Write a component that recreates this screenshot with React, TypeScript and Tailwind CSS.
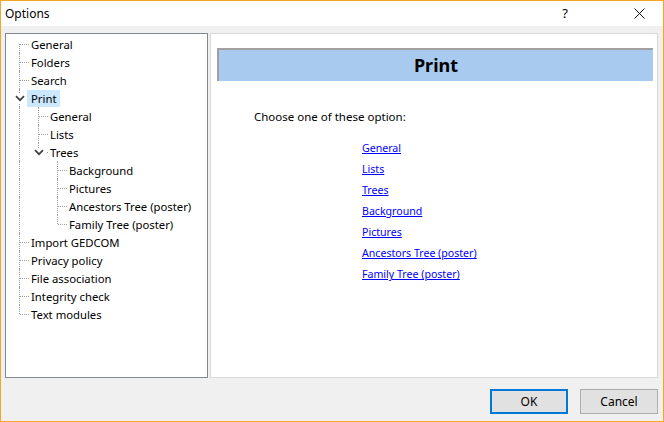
import type { ReactNode } from 'react'

type Node = { label: string; children?: Node[]; selected?: boolean }

const tree: Node[] = [
  { label: 'General' },
  { label: 'Folders' },
  { label: 'Search' },
  {
    label: 'Print',
    selected: true,
    children: [
      { label: 'General' },
      { label: 'Lists' },
      {
        label: 'Trees',
        children: [
          { label: 'Background' },
          { label: 'Pictures' },
          { label: 'Ancestors Tree (poster)' },
          { label: 'Family Tree (poster)' },
        ],
      },
    ],
  },
  { label: 'Import GEDCOM' },
  { label: 'Privacy policy' },
  { label: 'File association' },
  { label: 'Integrity check' },
  { label: 'Text modules' },
]

const links = ['General', 'Lists', 'Trees', 'Background', 'Pictures', 'Ancestors Tree (poster)', 'Family Tree (poster)']

function Chevron() {
  return (
    <svg width="10" height="7" viewBox="0 0 10 7">
      <path d="M1 1.2 L5 5.2 L9 1.2" fill="none" stroke="#404040" strokeWidth="1.7" />
    </svg>
  )
}

// one row of the tree; guides = whether each ancestor level still has siblings below
function Row({ node, guides, first, last }: { node: Node; guides: boolean[]; first: boolean; last: boolean }) {
  const open = !!node.children
  const cells: ReactNode[] = guides.map((g, i) => (
    <div key={i} className="relative w-[19px] h-full shrink-0">
      {g && <div className="absolute left-[9px] top-0 bottom-0 border-l border-dotted border-[#a0a0a0]" />}
    </div>
  ))
  return (
    <div className="flex items-center h-[18px]">
      {cells}
      <div className="relative w-[19px] h-full shrink-0 flex items-center">
        <div
          className={`absolute left-[9px] border-l border-dotted border-[#a0a0a0] ${first ? 'top-[9px]' : 'top-0'} ${last ? 'h-[9px]' : 'bottom-0'}`}
        />
        {open ? (
          <>
            <div className="absolute left-[4px] top-[5px] w-[11px] h-[9px] bg-white flex items-center justify-center">
              <Chevron />
            </div>
            {!node.selected && <div className="absolute left-[18px] top-[9px] w-px h-px bg-[#a0a0a0]" />}
          </>
        ) : (
          <div className="absolute left-[10px] right-0 top-[9px] border-t border-dotted border-[#a0a0a0]" />
        )}
      </div>
      <span
        className={`leading-[17px] h-[17px] px-[2px] whitespace-nowrap ${node.selected ? 'bg-[#cce8ff] -ml-[2px] px-[4px]' : ''}`}
      >
        {node.label}
      </span>
    </div>
  )
}

function renderTree(nodes: Node[], guides: boolean[], root: boolean): ReactNode[] {
  const out: ReactNode[] = []
  nodes.forEach((n, i) => {
    const last = i === nodes.length - 1
    out.push(<Row key={guides.length + n.label + i} node={n} guides={guides} first={root && i === 0} last={last} />)
    if (n.children) out.push(...renderTree(n.children, [...guides, !last], false))
  })
  return out
}

export default function App() {
  return (
    <div
      className="w-[664px] h-[422px] border border-[#f5a623] flex flex-col bg-[#f0f0f0] text-[11.3px] text-black overflow-hidden"
      style={{ fontFamily: '"Noto Sans", "Open Sans", sans-serif' }}
    >
      <div className="h-[25px] bg-white flex items-center shrink-0 text-[12px]">
        <span className="pl-[4px]">Options</span>
        <span className="ml-auto mr-[66px] text-[13px]">?</span>
        <svg width="11" height="11" viewBox="0 0 11 11" className="mr-[18px]">
          <path d="M0.5 0.5 L10.5 10.5 M10.5 0.5 L0.5 10.5" stroke="#111" strokeWidth="1" />
        </svg>
      </div>
      <div className="flex-1 flex flex-col pt-[7px] pl-[4px] pr-[5px]">
        <div className="flex gap-[2px] h-[345px]">
          <div className="w-[203px] border border-[#828790] bg-white pt-[1px] pl-[4px]">
            {renderTree(tree, [], true)}
          </div>
          <div className="flex-1 border border-[#dadada] bg-white pt-[14px] pl-[6px] pr-[4px]">
            <div className="h-[33px] bg-[#a8caef] border-t-2 border-l-2 border-[#a0a0a0] flex items-center justify-center">
              <span className="text-[18px] font-bold">Print</span>
            </div>
            <div className="pl-[37px] pt-[27px] text-[11.5px]">Choose one of these option:</div>
            <div className="pl-[145px] pt-[15px] flex flex-col gap-[4px]">
              {links.map(l => (
                <a key={l} href="#" className="text-[#0000ff] underline leading-[17px] w-fit text-[10.6px]">
                  {l}
                </a>
              ))}
            </div>
          </div>
        </div>
        <div className="flex justify-end gap-[12px] pt-[11px]">
          <button className="w-[78px] h-[25px] bg-[#e1e1e1] border-2 border-[#0078d7] text-[12px]">OK</button>
          <button className="w-[78px] h-[25px] bg-[#e1e1e1] border border-[#adadad] text-[12px]">Cancel</button>
        </div>
      </div>
    </div>
  )
}
